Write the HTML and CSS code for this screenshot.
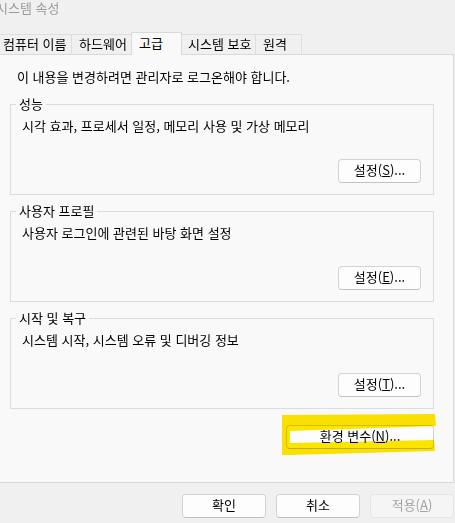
FILE: index.html
```html
<!DOCTYPE html>
<html lang="ko">
<head>
    <meta charset="UTF-8">
    <meta name="viewport" content="width=device-width, initial-scale=1.0">
    <title>시스템 속성</title>
    <link rel="stylesheet" href="styles.css">
</head>
<body>
    <!-- 제목 표시줄 -->
    <div class="titlebar">시스템 속성</div>

    <div class="dialog">
        <!-- 탭 -->
        <div class="tabs">
            <div class="tab tab-name">컴퓨터 이름</div>
            <div class="tab tab-hw">하드웨어</div>
            <div class="tab tab-adv active">고급</div>
            <div class="tab tab-prot">시스템 보호</div>
            <div class="tab tab-remote">원격</div>
        </div>

        <!-- 고급 탭 내용 -->
        <div class="panel">
            <p class="notice">이 내용을 변경하려면 관리자로 로그온해야 합니다.</p>

            <div class="group">
                <span class="group-title">성능</span>
                <p class="group-desc">시각 효과, 프로세서 일정, 메모리 사용 및 가상 메모리</p>
                <button class="btn">설정(<u>S</u>)...</button>
            </div>

            <div class="group">
                <span class="group-title">사용자 프로필</span>
                <p class="group-desc">사용자 로그인에 관련된 바탕 화면 설정</p>
                <button class="btn">설정(<u>E</u>)...</button>
            </div>

            <div class="group">
                <span class="group-title">시작 및 복구</span>
                <p class="group-desc">시스템 시작, 시스템 오류 및 디버깅 정보</p>
                <button class="btn">설정(<u>T</u>)...</button>
            </div>

            <div class="env-row">
                <button class="btn btn-env">환경 변수(<u>N</u>)...</button>
            </div>
        </div>

        <!-- 하단 버튼 -->
        <div class="footer">
            <button class="btn btn-footer">확인</button>
            <button class="btn btn-footer">취소</button>
            <button class="btn btn-footer" disabled>적용(<u>A</u>)</button>
        </div>
    </div>

    <!-- 형광펜 표시 -->
    <svg class="marker" width="160" height="46" viewBox="0 0 160 46">
        <polygon points="2,3 155,2 156,14 10,19 10,31 154,28 155,39 10,43 2,43" fill="#ffe600"/>
    </svg>
</body>
</html>
```

FILE: styles.css
```css
body {
    font-family: "Noto Sans CJK KR", "Noto Sans", sans-serif;
    font-size: 13px;
    line-height: 16px;
    color: #000;
    background-color: #f0f0f0;
    margin: 0;
    padding: 0;
    width: 455px;
    height: 523px;
    overflow: hidden;
    position: relative;
}

.titlebar {
    height: 32px;
    margin-left: -4px;
    color: #9c9c9c;
    white-space: nowrap;
}

.dialog {
    margin-left: -6px;
    width: 460px;
}

.tabs {
    display: flex;
    align-items: flex-end;
    height: 22px;
}

.tab {
    box-sizing: border-box;
    height: 20px;
    line-height: 18px;
    border: 1px solid #dedede;
    border-bottom: none;
    margin-right: -1px;
    padding-left: 7px;
    white-space: nowrap;
    background-color: #f0f0f0;
}

.tab-name { width: 78px; padding-left: 8px; }
.tab-hw { width: 61px; }
.tab-adv { width: 51px; }
.tab-prot { width: 75px; padding-left: 6px; }
.tab-remote { width: 47px; }

.tab.active {
    height: 23px;
    line-height: 20px;
    margin-bottom: -1px;
    padding-left: 7px;
    background-color: #f9f9f9;
    border-color: #d9d9d9;
    position: relative;
    z-index: 1;
}

.panel {
    box-sizing: border-box;
    height: 429px;
    background-color: #f9f9f9;
    border: 1px solid #d9d9d9;
    padding: 14px 19px 0 15px;
}

.notice {
    margin: 0 0 19px 7px;
}

.group {
    box-sizing: border-box;
    height: 91px;
    border: 1px solid #dcdcdc;
    margin-bottom: 16px;
    padding: 0 12px 11px 11px;
    display: flex;
    flex-direction: column;
}

.group-title {
    align-self: flex-start;
    margin: -9px 0 0 -6px;
    padding: 0 3px;
    background-color: #f9f9f9;
}

.group-desc {
    margin: 6px 0 0 0;
}

.btn {
    box-sizing: border-box;
    font-family: inherit;
    font-size: 13px;
    line-height: 16px;
    color: #000;
    height: 24px;
    width: 83px;
    padding: 0 0 2px 0;
    background-color: #fdfdfd;
    border: 1px solid #d3d3d3;
    border-bottom-color: #c2c2c2;
    border-radius: 4px;
}

.group .btn {
    align-self: flex-end;
    margin-top: auto;
}

.env-row {
    display: flex;
    justify-content: flex-end;
    margin-top: 1px;
}

.btn-env {
    width: 148px;
}

.footer {
    display: flex;
    gap: 10px;
    padding-left: 188px;
    margin-top: 11px;
}

.btn-footer {
    width: 86px;
}

.btn-footer:disabled {
    color: #a3a3a3;
    background-color: #f5f5f5;
    border-color: #e5e5e5;
}

.marker {
    position: absolute;
    left: 280px;
    top: 412px;
    mix-blend-mode: multiply;
}
```
